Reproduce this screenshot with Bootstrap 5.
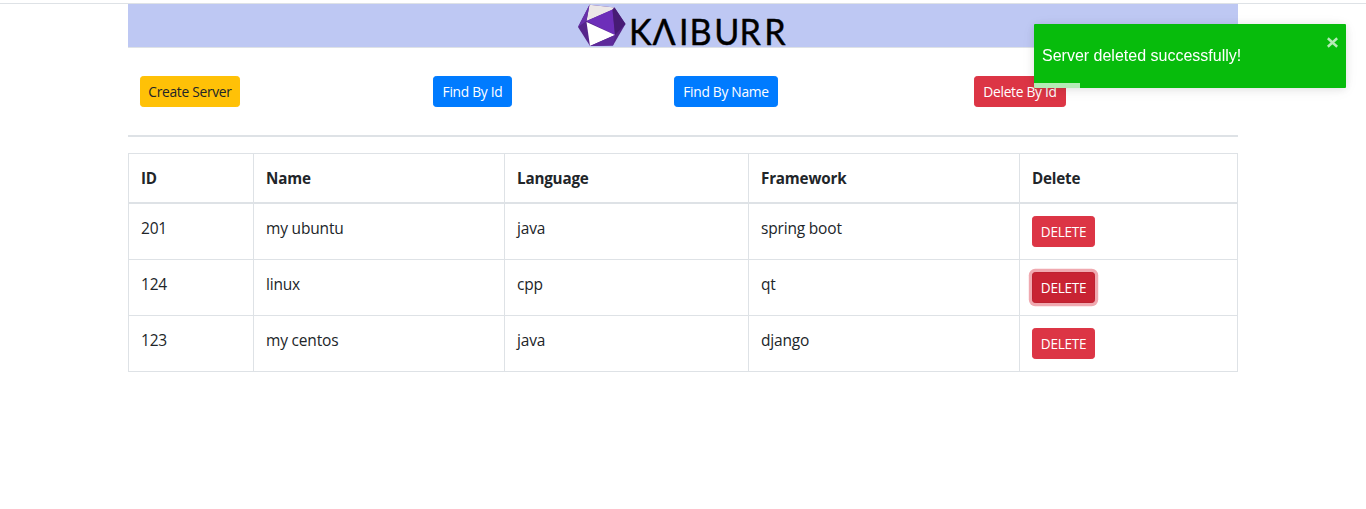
<!DOCTYPE html>
<html lang="en">
<head>
<meta charset="utf-8">
<meta name="viewport" content="width=device-width, initial-scale=1">
<title>Kaiburr Servers</title>
<link href="https://cdn.jsdelivr.net/npm/bootstrap@5.3.0/dist/css/bootstrap.min.css" rel="stylesheet">
<style>
body{font-family:"Open Sans","Noto Sans",sans-serif;color:#212529;overflow:hidden}
.topline{height:4px;border-bottom:1px solid #dee2e6}
.page{width:1110px}
.brandbar{height:44px;background:#bec8f3;border-bottom:1px solid #dee2e6}
.brandbar svg{display:block;overflow:visible}
.actions{display:grid;grid-template-columns:293px 241px 300px 1fr;padding:28px 12px;height:89px;border-bottom:2px solid #dee2e6;margin-bottom:16px}
.btn-sm{--bs-btn-border-radius:3.2px;--bs-btn-font-size:13.8px;height:31px;white-space:nowrap;padding:5px 0 3px;text-align:center;letter-spacing:-.3px}
.btn-warning{--bs-btn-color:#212529}
.btn-primary{--bs-btn-bg:#007bff;--bs-btn-border-color:#007bff}
.w-create{width:100px}.w-id{width:79px}.w-name{width:104px}.w-del{width:92px}
.w-row{width:63px;font-size:13.6px}
.servers{--bs-table-color:#212529;table-layout:fixed;width:1110px;margin:0;border-collapse:collapse}
.servers th,.servers td{border:1px solid #dee2e6!important;padding:12px;line-height:24px;font-size:15.5px;vertical-align:top;letter-spacing:-.18px}
.servers thead th{border-bottom:2px solid #dee2e6!important;font-size:15.2px}
.servers tbody td{height:56px}
.servers .btn{display:block}
.btn-focused{background:#c82333;border-color:#bd2130;box-shadow:0 0 0 3.2px rgba(225,83,97,.5)}
.notice{width:312px;height:64px;top:24px;right:20px;background:#07bc0c;border-radius:1px;box-shadow:0 1px 10px rgba(0,0,0,.1),0 2px 15px rgba(0,0,0,.05);font-family:"Liberation Sans",Arial,sans-serif;font-size:16px;padding:0 8px;overflow:hidden}
.notice svg{top:13px;right:8px}
.timer{left:0;bottom:0;width:45.5px;height:5px;background:rgba(255,255,255,.7)}
</style>
</head>
<body>
<div class="topline"></div>
<main class="page mx-auto">
  <header class="brandbar d-flex justify-content-center">
    <svg width="214" height="44" viewBox="576 4 214 44" role="img" aria-label="Kaiburr">
      <path fill="#56258b" d="M589.500 4.800 578 27 590 46 613 45.500 625.500 24 614.500 7.500z"/>
      <path fill="#ece7e7" d="M589.500 4.800 614.500 7.500 612 10 586.500 21z"/>
      <path fill="#6d2eb9" d="M586.500 21 612.500 9.500 615 35z"/>
      <path fill="#471b75" d="M614.500 7.500 625.500 24 615 35 612.500 9.500z"/>
      <path fill="#fff" d="M586.500 22 615 35 590 46z"/>
      <path fill="#6830aa" d="M589.500 4.800 578 27 586.500 21z"/>
      <path fill="#5d2a9b" d="M615 35 613 45.500 590 46z"/>
      <text transform="translate(629 0) scale(.95 1)" y="45.200" x="0 24.800 52.600 63.700 89.700 116.300 142.300" font-family="Lato, sans-serif" font-size="36" fill="#000" stroke="#000" stroke-width=".4">KΛIBURR</text>
    </svg>
  </header>
  <section class="actions">
    <div><button class="btn btn-sm btn-warning w-create">Create Server</button></div>
    <div><button class="btn btn-sm btn-primary w-id">Find By Id</button></div>
    <div><button class="btn btn-sm btn-primary w-name">Find By Name</button></div>
    <div><button class="btn btn-sm btn-danger w-del">Delete By Id</button></div>
  </section>
  <table class="table servers">
    <colgroup><col style="width:125px"><col style="width:251px"><col style="width:244px"><col style="width:271px"><col></colgroup>
    <thead><tr><th>ID</th><th>Name</th><th>Language</th><th>Framework</th><th>Delete</th></tr></thead>
    <tbody>
      <tr><td>201</td><td>my ubuntu</td><td>java</td><td>spring boot</td><td><button class="btn btn-sm btn-danger w-row">DELETE</button></td></tr>
      <tr><td>124</td><td>linux</td><td>cpp</td><td>qt</td><td><button class="btn btn-sm btn-danger w-row btn-focused">DELETE</button></td></tr>
      <tr><td>123</td><td>my centos</td><td>java</td><td>django</td><td><button class="btn btn-sm btn-danger w-row">DELETE</button></td></tr>
    </tbody>
  </table>
</main>
<div class="notice position-fixed d-flex align-items-center text-white" role="alert">
  <span>Server deleted successfully!</span>
  <svg class="position-absolute" width="11" height="11" viewBox="0 0 11 11" stroke="#fff" stroke-opacity=".7" stroke-width="2.600"><path d="M.8 1.300 10.200 9.700M10.200 1.300.8 9.700"/></svg>
  <div class="timer position-absolute"></div>
</div>
<script src="https://cdn.jsdelivr.net/npm/bootstrap@5.3.0/dist/js/bootstrap.bundle.min.js"></script>
</body>
</html>
